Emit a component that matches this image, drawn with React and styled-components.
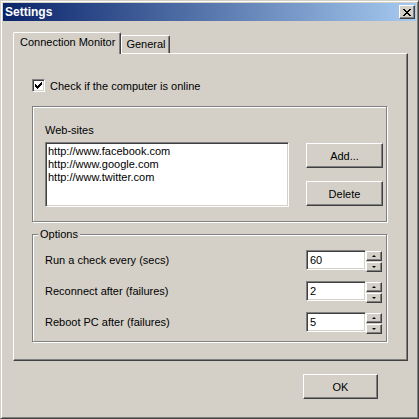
import styled, { createGlobalStyle } from "styled-components";

const GlobalStyle = createGlobalStyle`
  body {
    margin: 0;
    background: #d4d0c8;
    font-family: "Liberation Sans", Arial, sans-serif;
    font-size: 11px;
    color: #000;
  }
`;

const raised = `
  border: 1px solid;
  border-color: #fff #404040 #404040 #fff;
  box-shadow: inset -1px -1px #808080;
  background: #d4d0c8;
`;

const sunken = `
  border: 1px solid;
  border-color: #808080 #fff #fff #808080;
  box-shadow: inset 1px 1px #404040, inset -1px -1px #d4d0c8;
  background: #fff;
`;

const Window = styled.div`
  box-sizing: border-box;
  width: 419px;
  height: 419px;
  background: #d4d0c8;
  border: 1px solid;
  border-color: #d4d0c8 #404040 #404040 #d4d0c8;
  box-shadow: inset 1px 1px #fff, inset -1px -1px #808080;
  padding: 2px;
  display: flex;
  flex-direction: column;
`;

const TitleBar = styled.div`
  height: 18px;
  display: flex;
  align-items: center;
  justify-content: space-between;
  padding: 0 1px 0 2px;
  background: linear-gradient(to right, #0a246a, #a6caf0);
  color: #fff;
  font-weight: bold;
  font-size: 12px;
`;

const CloseButton = styled.div`
  ${raised}
  box-sizing: border-box;
  width: 16px;
  height: 14px;
  display: flex;
  align-items: center;
  justify-content: center;
`;

const Body = styled.div`
  flex: 1;
  padding: 11px 0 0 10px;
`;

const TabStrip = styled.div`
  display: flex;
  align-items: flex-end;
  height: 21px;
  position: relative;
  z-index: 1;
`;

const Tab = styled.div`
  box-sizing: border-box;
  height: ${(p) => (p.$active ? "22px" : "18px")};
  margin-bottom: ${(p) => (p.$active ? "-1px" : "0")};
  padding: ${(p) => (p.$active ? "3px 5px 0 6px" : "2px 3px 0 4px")};
  border-top: 1px solid #fff;
  border-left: 1px solid #fff;
  border-right: 1px solid #404040;
  border-radius: 2px 2px 0 0;
  box-shadow: inset -1px 0 #808080;
  background: #d4d0c8;
  line-height: 13px;
  white-space: nowrap;
`;

const Panel = styled.div`
  box-sizing: border-box;
  width: 395px;
  height: 308px;
  ${raised}
  padding: 25px 20px 0 18px;
`;

const CheckRow = styled.label`
  display: flex;
  align-items: center;
  gap: 5px;
  height: 13px;
`;

const CheckBox = styled.span`
  box-sizing: border-box;
  width: 13px;
  height: 13px;
  ${sunken}
  display: flex;
  align-items: center;
  justify-content: center;
`;

const Group = styled.div`
  box-sizing: border-box;
  position: relative;
  height: ${(p) => p.$height}px;
  margin-top: ${(p) => p.$gap}px;
  border: 1px solid #808080;
  box-shadow: 1px 1px #fff, inset 1px 1px #fff;
  padding: ${(p) => p.$pad};
`;

const Legend = styled.span`
  position: absolute;
  top: -7px;
  left: 5px;
  padding: 0 2px;
  background: #d4d0c8;
  line-height: 13px;
`;

const Label = styled.div`
  line-height: 13px;
`;

const ListRow = styled.div`
  display: flex;
  gap: 17px;
  margin-top: 5px;
`;

const ListBox = styled.div`
  box-sizing: border-box;
  width: 244px;
  height: 65px;
  ${sunken}
  padding: 2px 0 0 2px;
  line-height: 13px;
`;

const ButtonColumn = styled.div`
  display: flex;
  flex-direction: column;
  gap: 13px;
  padding-top: 1px;
`;

const Button = styled.div`
  box-sizing: border-box;
  width: ${(p) => p.$width || 77}px;
  height: 25px;
  ${raised}
  display: flex;
  align-items: center;
  justify-content: center;
`;

const Rows = styled.div`
  display: flex;
  flex-direction: column;
  gap: 10px;
`;

const OptionRow = styled.div`
  display: flex;
  align-items: center;
  justify-content: space-between;
  height: 21px;
`;

const Spin = styled.div`
  display: flex;
  align-items: flex-start;
  height: 21px;
`;

const NumberField = styled.div`
  box-sizing: border-box;
  width: 60px;
  height: 20px;
  ${sunken}
  padding-left: 3px;
  line-height: 18px;
`;

const SpinButtons = styled.div`
  display: flex;
  flex-direction: column;
  gap: 1px;
  margin-top: 1px;
`;

const SpinButton = styled.div`
  box-sizing: border-box;
  width: 16px;
  height: 10px;
  ${raised}
  display: flex;
  align-items: center;
  justify-content: center;

  &::after {
    content: "";
    border-left: 2px solid transparent;
    border-right: 2px solid transparent;
    ${(p) =>
      p.$down ? "border-top: 2px solid #000;" : "border-bottom: 2px solid #000;"}
  }
`;

const Footer = styled.div`
  display: flex;
  justify-content: flex-end;
  padding-right: 38px;
  margin-top: 13px;
`;

const options = [
  ["Run a check every (secs)", "60"],
  ["Reconnect after (failures)", "2"],
  ["Reboot PC after (failures)", "5"],
];

const sites = [
  "http://www.facebook.com",
  "http://www.google.com",
  "http://www.twitter.com",
];

export default function App() {
  return (
    <>
      <GlobalStyle />
      <Window>
        <TitleBar>
          <span>Settings</span>
          <CloseButton>
            <svg width="8" height="7" viewBox="0 0 8 7" shapeRendering="crispEdges">
              <path d="M0 0h2v1h-2zM6 0h2v1h-2zM1 1h2v1h-2zM5 1h2v1h-2zM2 2h4v1h-4zM3 3h2v1h-2zM2 4h4v1h-4zM1 5h2v1h-2zM5 5h2v1h-2zM0 6h2v1h-2zM6 6h2v1h-2z" fill="#000" />
            </svg>
          </CloseButton>
        </TitleBar>
        <Body>
          <TabStrip>
            <Tab $active>Connection Monitor</Tab>
            <Tab>General</Tab>
          </TabStrip>
          <Panel>
            <CheckRow>
              <CheckBox>
                <svg width="7" height="7" viewBox="0 0 7 7" shapeRendering="crispEdges">
                  <path d="M0 2h1v3h-1zM1 3h1v3h-1zM2 4h1v3h-1zM3 3h1v3h-1zM4 2h1v3h-1zM5 1h1v3h-1zM6 0h1v3h-1z" fill="#000" />
                </svg>
              </CheckBox>
              Check if the computer is online
            </CheckRow>
            <Group $height={116} $gap={14} $pad="17px 0 0 12px">
              <Label>Web-sites</Label>
              <ListRow>
                <ListBox>
                  {sites.map((s) => (
                    <div key={s}>{s}</div>
                  ))}
                </ListBox>
                <ButtonColumn>
                  <Button>Add...</Button>
                  <Button>Delete</Button>
                </ButtonColumn>
              </ListRow>
            </Group>
            <Group $height={108} $gap={12} $pad="15px 4px 0 12px">
              <Legend>Options</Legend>
              <Rows>
                {options.map(([label, value]) => (
                  <OptionRow key={label}>
                    <Label>{label}</Label>
                    <Spin>
                      <NumberField>{value}</NumberField>
                      <SpinButtons>
                        <SpinButton />
                        <SpinButton $down />
                      </SpinButtons>
                    </Spin>
                  </OptionRow>
                ))}
              </Rows>
            </Group>
          </Panel>
          <Footer>
            <Button $width={75}>OK</Button>
          </Footer>
        </Body>
      </Window>
    </>
  );
}
